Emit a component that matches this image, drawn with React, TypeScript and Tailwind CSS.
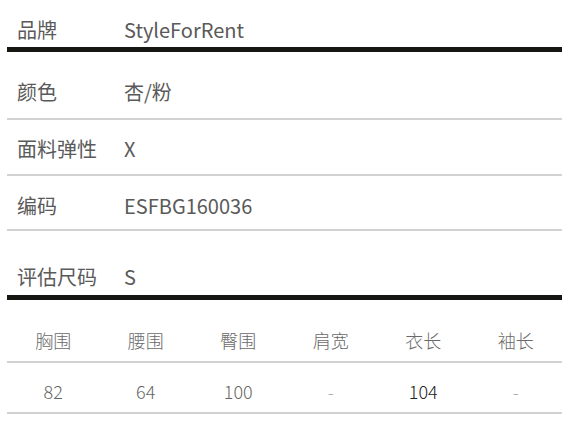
const FONT = "font-['Noto_Sans_CJK_SC','Noto_Sans',sans-serif]";

const sizes = [
  { label: "胸围", value: "82" },
  { label: "腰围", value: "64" },
  { label: "臀围", value: "100" },
  { label: "肩宽", value: "-" },
  { label: "衣长", value: "104", strong: true },
  { label: "袖长", value: "-" },
];

function InfoRow({
  label,
  value,
  className,
}: {
  label: string;
  value: string;
  className: string;
}) {
  return (
    <div className={`flex items-center pl-[10px] text-[20px] leading-[26px] text-[#5a5a5a] ${className}`}>
      <span className="w-[107px] shrink-0">{label}</span>
      <span>{value}</span>
    </div>
  );
}

export default function App() {
  return (
    <div className={`w-[570px] h-[424px] bg-white px-[7px] ${FONT}`}>
      <div className="w-[555px]">
        {/* Brand */}
        <InfoRow label="品牌" value="StyleForRent" className="pt-[17px] pb-[4px] border-b-[5px] border-[#161612]" />

        {/* Details */}
        <InfoRow label="颜色" value="杏/粉" className="pt-[27px] pb-[13px] border-b-2 border-[#d2d2d2]" />
        <InfoRow label="面料弹性" value="X" className="pt-[16px] pb-[12px] border-b-2 border-[#d2d2d2]" />
        <InfoRow label="编码" value="ESFBG160036" className="pt-[17px] pb-[10px] border-b-2 border-[#d2d2d2]" />

        {/* Size */}
        <InfoRow label="评估尺码" value="S" className="pt-[33px] pb-[5px] border-b-[5px] border-[#161612]" />

        {/* Measurements */}
        <div className="grid grid-cols-6 text-center text-[18px] leading-[24px] font-light text-[#6a6a6a] pt-[28px] pb-[9px] border-b-2 border-[#d2d2d2]">
          {sizes.map((s) => (
            <span key={s.label}>{s.label}</span>
          ))}
        </div>
        <div className="grid grid-cols-6 text-center text-[18px] leading-[24px] font-light pt-[16px] pb-[9px] border-b-2 border-[#d2d2d2]">
          {sizes.map((s) => (
            <span
              key={s.label}
              className={s.strong ? "text-[#222]" : s.value === "-" ? "text-[#aaa]" : "text-[#666]"}
            >
              {s.value}
            </span>
          ))}
        </div>
      </div>
    </div>
  );
}
